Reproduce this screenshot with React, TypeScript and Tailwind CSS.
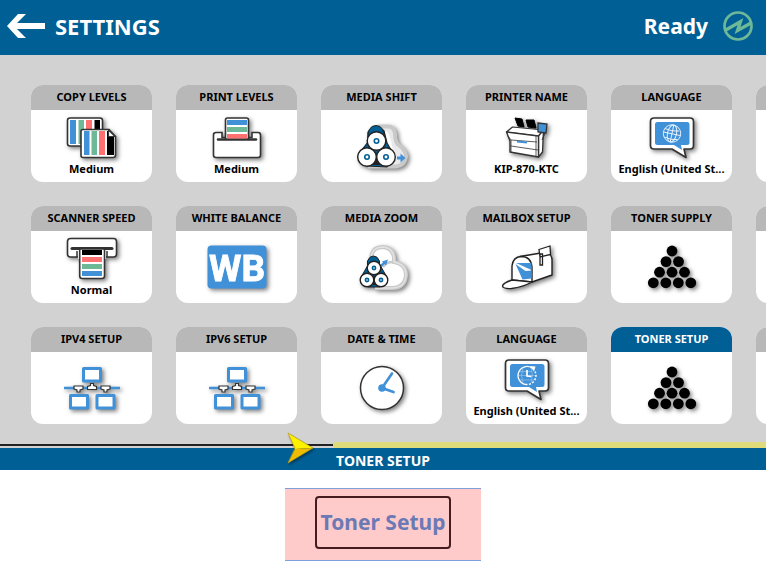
import type { ReactNode } from "react";

const BLUE = "#4191d9";
const GREEN = "#6db897";
const RED = "#ff7070";
const NAVY = "#006096";
const INK = "#333333";

function Icon({ children, height = 48 }: { children: ReactNode; height?: number }) {
  return (
    <svg
      aria-hidden="true"
      width="56"
      height={height}
      viewBox={`0 0 56 ${height}`}
      className="shrink-0 overflow-visible drop-shadow-[2px_2px_2px_rgba(0,0,0,0.5)]"
    >
      {children}
    </svg>
  );
}

function CopyIcon() {
  return (
    <Icon height={46}>
      <rect x="3.5" y="3" width="35" height="28" rx="2.5" fill="#fff" stroke={INK} strokeWidth="1.6" />
      <path d="M6 5h6v24H6z" fill={BLUE} />
      <path d="M14.5 5H20v24h-5.500z" fill={GREEN} />
      <path d="M22 5h6v24h-6z" fill={RED} />
      <path d="M30.500 5H36v24h-5.500z" fill="#000" />
      <path d="M19 14.500h26l6.500 7V40q0 2.500-2.500 2.500H19q-2 0-2-2v-24q0-2 2-2z" fill="#fff" stroke={INK} strokeWidth="1.600" />
      <path d="M20 16h5.500v24H20z" fill={BLUE} />
      <path d="M27.500 16H33v24h-5.500z" fill={GREEN} />
      <path d="M35 16h6v24h-6z" fill={RED} />
      <path d="M43 16h2v6h5v18h-7z" fill="#000" />
      <path d="M44.500 15v6.500H51z" fill="#fff" stroke={INK} strokeWidth="1.200" />
    </Icon>
  );
}

function PrintIcon() {
  return (
    <Icon height={46}>
      <path d="M7 17.500h6v5h30v-5h6q2.500 0 2.500 2.500v20q0 2.500-2.500 2.500H7Q4.500 42.500 4.500 40V20q0-2.500 2.500-2.500z" fill="#fff" stroke={INK} strokeWidth="1.600" />
      <path d="M9 24.500h38" stroke={INK} strokeWidth="2.500" strokeLinecap="round" />
      <path d="M16.500 24V5q0-2 2-2h19q2 0 2 2v19z" fill="#fff" stroke={INK} strokeWidth="1.600" />
      <path d="M18 5h20v5H18z" fill={BLUE} />
      <path d="M18 12h20v5H18z" fill={GREEN} />
      <path d="M18 19h20v4.500H18z" fill={RED} />
    </Icon>
  );
}

function ScannerIcon() {
  return (
    <Icon height={46}>
      <rect x="3.500" y="2.500" width="49" height="18.500" rx="3" fill="#fff" stroke={INK} strokeWidth="1.600" />
      <path d="M14 15h28v8H14z" fill="#fff" />
      <path d="M13 21v-6M43 21v-6" stroke={INK} strokeWidth="1.500" />
      <path d="M8 12.500h40" stroke={INK} strokeWidth="3" strokeLinecap="round" />
      <path d="M15.700 13v27q0 2.500 2.500 2.500H38q2.500 0 2.500-2.500V13z" fill="#fff" stroke={INK} strokeWidth="1.600" />
      <path d="M18 14h20v5H18z" fill="#000" />
      <path d="M18 21h20v5H18z" fill={RED} />
      <path d="M18 28h20v5H18z" fill={GREEN} />
      <path d="M18 35h20v5H18z" fill={BLUE} />
    </Icon>
  );
}

function Roll({ x, y, r }: { x: number; y: number; r: number }) {
  return (
    <g>
      <circle cx={x} cy={y} r={r} fill="#fff" stroke="#222" strokeWidth="1.400" />
      <circle cx={x} cy={y} r={r * 0.24} fill="#fff" stroke={NAVY} strokeWidth="1.600" />
    </g>
  );
}

function MediaShiftIcon() {
  return (
    <Icon>
      <path d="M24 4.500h10q6 0 7 7 0 8 3 11 8 6 8 12-1 9-10 10H14" fill="#e9e9e9" stroke="#c9c9c9" strokeWidth="4" />
      <path d="M31 10q4 5 5 15l4 8" fill="none" stroke="#fff" strokeWidth="4" />
      <path d="M14 20 4 33l9 11 20 1 8-10-8-14-3-12q-8-9-16 1z" fill={NAVY} stroke="#222" strokeWidth="1.200" strokeLinejoin="round" />
      <path d="M14 17q-1-13 8-13.500 9 .5 8 13.500z" fill={NAVY} stroke="#222" />
      <path d="m22 30 5 13H17z" fill="#222" />
      <Roll x={13} y={35} r={9.3} />
      <Roll x={32} y={35} r={9.3} />
      <Roll x={22.5} y={19} r={9.3} />
      <path d="M43 34.500h3.500v-3l5 4.500-5 4.500v-3H43z" fill={BLUE} />
    </Icon>
  );
}

function MediaZoomIcon() {
  return (
    <Icon>
      <path d="M17 17q0-13 12-13 12 1 11 15 12 2 12 13-1 13-14 13H21" fill="#fff" stroke="#c9c9c9" strokeWidth="4" />
      <path d="M17 17q0-13 12-13 12 1 11 15 12 2 12 13-1 13-14 13H21" fill="none" stroke="#e2e2e2" strokeWidth="1.500" />
      <path d="M39 19q-7 0-10 5" fill="none" stroke="#c9c9c9" strokeWidth="2.500" />
      <path d="m28 18.500 6-2-2 6-1.500-1.500-2.500 3-2-2 3-2.500z" fill={BLUE} />
      <path d="m14 22-8 14 8 8h12l8-8-8-14z" fill={NAVY} stroke="#222" />
      <path d="M13.500 23V18q2-5 6-5t6 5v5z" fill={NAVY} stroke="#222" />
      <path d="m20 32 4 10h-8z" fill="#222" />
      <Roll x={13} y={37} r={6.8} />
      <Roll x={27} y={37} r={6.8} />
      <Roll x={20} y={25} r={6.8} />
    </Icon>
  );
}

function PrinterIcon() {
  return (
    <Icon height={46}>
      <path d="m16 3 7 1 2 8-6-1zM27 5l8 0 2 8-8-1z" fill="#000" stroke="#000" strokeLinejoin="round" />
      <path d="m7.500 17 6-5 31 3-5 6z" fill="#fff" stroke={INK} strokeWidth="1.200" strokeLinejoin="round" />
      <path d="m39.500 21 5-6-1 22-4 5z" fill="#fff" stroke={INK} strokeWidth="1.300" strokeLinejoin="round" />
      <path d="m7.500 17 32 4v21L11 37V26z" fill="#fff" stroke={INK} strokeWidth="1.400" strokeLinejoin="round" />
      <path d="m9 21 3 4 26 2M12 25v12M12 31l27 4M37 21v20" fill="none" stroke={INK} strokeWidth="0.800" />
      <path d="m18 26.500 10 1" stroke={BLUE} strokeWidth="2" />
      <path d="m46 18-3 7" stroke={INK} />
      <path d="m39 8 9 1-1 9-8-1z" fill={BLUE} stroke={INK} strokeWidth="1.300" />
    </Icon>
  );
}

function Bubble({ children }: { children: ReactNode }) {
  return (
    <Icon height={46}>
      <path d="M10 3h36q3.500 0 3.500 3.500v24Q49.500 34 46 34h-6l2 8.500L28 34H10q-3.500 0-3.500-3.500v-24Q6.500 3 10 3z" fill="#fff" stroke={INK} strokeWidth="1.700" strokeLinejoin="round" />
      <path d="M13.500 7h29.500q2.500 0 2.500 2.500v18Q45.500 30 43 30h-6l1 5-8-5H13.500q-2.500 0-2.500-2.500v-18Q11 7 13.500 7z" fill={BLUE} />
      {children}
    </Icon>
  );
}

function LanguageIcon() {
  return (
    <Bubble>
      <g fill="none" stroke="#e6f2fc" strokeWidth="1">
        <circle cx="28" cy="18.500" r="8.700" />
        <ellipse cx="28" cy="18.500" rx="4.500" ry="8.700" transform="rotate(12 28 18.500)" />
        <path d="m29.800 10-3.600 17M19.500 17l17 3.600M21 13.500q7 3.500 14 2.500M20.500 22q7 3.500 13 2.500" />
      </g>
    </Bubble>
  );
}

function LanguageTimeIcon() {
  return (
    <Bubble>
      <path d="M20 14.500h13M19 18.500h18M20 23h15M24 11q-3 7 0 15M32 11q3 7 0 15" fill="none" stroke="#8fc0ec" strokeWidth="0.700" />
      <path d="M28 27.500a9 9 0 1 1 5-16.500" fill="none" stroke="#fff" strokeWidth="1.300" />
      <path d="M36 14.500a9 9 0 0 1-8 13" fill="none" stroke="#fff" strokeWidth="1.500" strokeDasharray="2 1.500" />
      <path d="m31 9 5.500.500-1.500 5z" fill="#fff" />
      <path d="M28 13V19l4.500.500" fill="none" stroke="#fff" strokeWidth="1.700" />
    </Bubble>
  );
}

function WhiteBalanceIcon() {
  return (
    <Icon>
      <rect x="-1.500" y="2.500" width="59" height="43" rx="4" fill={BLUE} />
      <text x="28" y="37.500" textAnchor="middle" fill="#fff" stroke="#fff" strokeWidth="0.800" fontSize="37" fontWeight="700" fontFamily="Roboto, sans-serif">
        WB
      </text>
    </Icon>
  );
}

function MailboxIcon() {
  return (
    <Icon>
      <path d="m21 13.500 27-4.500q5 3 5 8v15l-20 7z" fill="#fff" stroke="#222" strokeWidth="1.400" strokeLinejoin="round" />
      <path d="M13 37V23q1-9 9-9.500 10 0 11 10.500v15z" fill="#fff" stroke="#222" strokeWidth="1.400" strokeLinejoin="round" />
      <path d="m17 20 15.500 0v7z" fill={BLUE} />
      <path d="m16.500 21 10 7 6-.500v8l-9 1z" fill={BLUE} />
      <path d="M13 37q-9 3-9.500 6 .5 3 9 2.500Q24 44 33 39z" fill="#fff" stroke="#222" strokeWidth="1.400" strokeLinejoin="round" />
      <path d="M41 11h2.500v11H41zM40 6.500 51 3l.500 8.500L41 14z" fill="#fff" stroke="#222" strokeWidth="1.300" />
    </Icon>
  );
}

function TonerIcon() {
  const rows = [[28], [22, 34.5], [15.5, 28, 40.5], [9.3, 21.8, 34.3, 46.8]];
  return (
    <Icon>
      {rows.map((row, i) => row.map((x) => <circle key={`${i}-${x}`} cx={x} cy={8 + i * 10.6} r="5.400" fill="#000" />))}
    </Icon>
  );
}

function NetworkIcon() {
  return (
    <Icon>
      <path d="M0 24h56" stroke={BLUE} strokeWidth="2.500" />
      <g fill="#fff" stroke={BLUE} strokeWidth="3" strokeLinejoin="round">
        <path d="M19.500 4.500h17v12.500h-17zM6.500 31.500h17V44h-17zM33 31.500h17V44H33z" />
      </g>
      <g fill="#fff" stroke={INK} strokeWidth="1.200">
        <path d="M10 22h9v3l-3 1v2h-3v-2l-3-1zM37 22h9v3l-3 1v2h-3v-2l-3-1zM23.500 25.500v-3l3-1v-2h3v2l3 1v3z" />
      </g>
    </Icon>
  );
}

function ClockIcon() {
  return (
    <Icon>
      <circle cx="28" cy="24" r="21.500" fill="#fff" stroke={INK} strokeWidth="1.500" />
      <path d="M38 9.500 28 24l11.500 4" fill="none" stroke={BLUE} strokeWidth="2.700" strokeLinecap="round" />
      <circle cx="28" cy="24" r="3.800" fill={BLUE} />
    </Icon>
  );
}

type Tile = { title: string; icon?: ReactNode; value?: string; active?: boolean };

const rows: Tile[][] = [
  [
    { title: "COPY LEVELS", icon: <CopyIcon />, value: "Medium" },
    { title: "PRINT LEVELS", icon: <PrintIcon />, value: "Medium" },
    { title: "MEDIA SHIFT", icon: <MediaShiftIcon /> },
    { title: "PRINTER NAME", icon: <PrinterIcon />, value: "KIP-870-KTC" },
    { title: "LANGUAGE", icon: <LanguageIcon />, value: "English (United St..." },
    { title: "" },
  ],
  [
    { title: "SCANNER SPEED", icon: <ScannerIcon />, value: "Normal" },
    { title: "WHITE BALANCE", icon: <WhiteBalanceIcon /> },
    { title: "MEDIA ZOOM", icon: <MediaZoomIcon /> },
    { title: "MAILBOX SETUP", icon: <MailboxIcon /> },
    { title: "TONER SUPPLY", icon: <TonerIcon /> },
    { title: "" },
  ],
  [
    { title: "IPV4 SETUP", icon: <NetworkIcon /> },
    { title: "IPV6 SETUP", icon: <NetworkIcon /> },
    { title: "DATE & TIME", icon: <ClockIcon /> },
    { title: "LANGUAGE", icon: <LanguageTimeIcon />, value: "English (United St..." },
    { title: "TONER SETUP", icon: <TonerIcon />, active: true },
    { title: "" },
  ],
];

function TileButton({ title, icon, value, active }: Tile) {
  return (
    <button type="button" className="flex h-[97px] w-[121px] shrink-0 flex-col overflow-hidden rounded-xl bg-white text-[11px] font-bold text-black">
      <span className={`flex h-[25px] w-full shrink-0 items-center justify-center whitespace-nowrap ${active ? "bg-[#006096] text-white" : "bg-[#b8b8b8]"}`}>
        {title}
      </span>
      <span className="flex w-full grow flex-col items-center justify-center whitespace-nowrap">
        {icon}
        {value && <span className="leading-4">{value}</span>}
      </span>
    </button>
  );
}

export default function App() {
  return (
    <div className="min-h-screen overflow-hidden bg-white font-['Noto_Sans',sans-serif]">
      <header className="flex h-[55px] items-center bg-[#006096] pr-3 pl-[7px] text-white">
        <button type="button" aria-label="Back" className="pb-1">
          <svg width="38" height="24" viewBox="0 0 38 24" fill="#fff">
            <path d="M0 12 11 0h8l-9 9h28v6H10l9 9h-8z" />
          </svg>
        </button>
        <h1 className="grow pb-0.5 pl-[10px] text-[22px] font-bold">SETTINGS</h1>
        <span className="pb-0.5 text-[21px] font-bold">Ready</span>
        <svg aria-hidden="true" width="32" height="32" viewBox="0 0 32 32" fill="none" stroke={GREEN} className="mb-1 ml-3.5">
          <circle cx="16" cy="16" r="13.500" strokeWidth="2.700" />
          <path d="M3 20.500 18.500 11.500 15.500 20.500 29 13" strokeWidth="3.300" />
        </svg>
      </header>

      <main className="flex flex-col gap-6 overflow-hidden bg-[#d2d2d2] pt-[30px] pb-[18px] pl-[31px]">
        {rows.map((row, i) => (
          <div key={i} className="flex gap-6">
            {row.map((tile, j) => (
              <TileButton key={j} {...tile} />
            ))}
          </div>
        ))}
      </main>

      <div className="relative flex h-[6px] items-center bg-[#d2d2d2]">
        <div className="h-[2px] w-[43.500%] bg-[#222]" />
        <div className="h-[6px] grow bg-[#dfdb7b]" />
        <svg aria-hidden="true" width="27" height="32" viewBox="0 0 27 32" className="absolute -top-[9px] left-[37.500%] z-10 overflow-visible drop-shadow-[1px_2px_1px_rgba(0,0,0,0.4)]">
          <path d="m1 0 25 15-18 1z" fill="#fff200" />
          <path d="M26 15 1 30l7-14z" fill="#efbd00" />
          <path d="m1 0 25 15L1 30l7-15z" fill="none" stroke="#b59a16" strokeWidth="0.700" />
        </svg>
      </div>

      <h2 className="flex h-[22px] items-center justify-center bg-[#006096] pt-1 text-sm font-bold text-white">TONER SETUP</h2>

      <section className="flex justify-center pt-[18px]">
        <div className="flex h-[73px] w-[196px] items-center justify-center border-y border-[#7e9fda] bg-[#ffcaca] pb-1">
          <button type="button" className="h-[53px] rounded border-2 border-[#451c20] px-1 text-[21px] font-bold whitespace-nowrap text-[#6b7ab5]">
            Toner Setup
          </button>
        </div>
      </section>
    </div>
  );
}
